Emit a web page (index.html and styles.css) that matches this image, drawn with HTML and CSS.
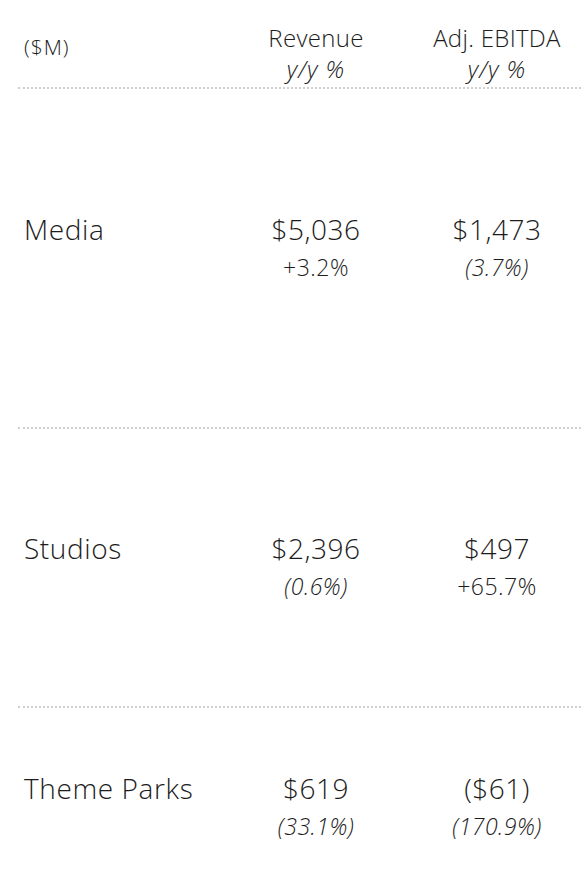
FILE: index.html
```html
<!DOCTYPE html>
<html lang="en">
  <head>
    <meta charset="UTF-8" />
    <title>Segment results</title>
    <link rel="stylesheet" href="styles.css">
  </head>
  <body>
    <div class="table">
      <div class="row head">
        <div class="label unit">($M)</div>
        <div class="cell">
          <div class="title">Revenue</div>
          <div class="sub neg">y/y %</div>
        </div>
        <div class="cell">
          <div class="title">Adj. EBITDA</div>
          <div class="sub neg">y/y %</div>
        </div>
      </div>

      <!-- segments -->
      <div class="row seg media">
        <div class="label">Media</div>
        <div class="cell">
          <div class="main">$5,036</div>
          <div class="sub">+3.2%</div>
        </div>
        <div class="cell">
          <div class="main">$1,473</div>
          <div class="sub neg">(3.7%)</div>
        </div>
      </div>

      <div class="row seg studios">
        <div class="label">Studios</div>
        <div class="cell">
          <div class="main">$2,396</div>
          <div class="sub neg">(0.6%)</div>
        </div>
        <div class="cell">
          <div class="main">$497</div>
          <div class="sub">+65.7%</div>
        </div>
      </div>

      <div class="row seg parks">
        <div class="label">Theme Parks</div>
        <div class="cell">
          <div class="main">$619</div>
          <div class="sub neg">(33.1%)</div>
        </div>
        <div class="cell">
          <div class="main">($61)</div>
          <div class="sub neg">(170.9%)</div>
        </div>
      </div>
    </div>
  </body>
</html>
```

FILE: styles.css
```css
body {
  margin: 0;
  background: #ffffff;
  color: #1c1c1c;
  font-family: "Open Sans", "Noto Sans", sans-serif;
  font-weight: 300;
  overflow: hidden;
}

.table {
  margin-left: 18px;
}

.row {
  display: grid;
  grid-template-columns: 192px 180px 162px;
  column-gap: 10px;
  align-content: center;
  align-items: start;
  padding-left: 6px;
  border-top: 2px dotted #cfcfcf;
}

.row.head {
  border-top: none;
  height: 89px;
  align-items: center;
  padding-top: 20px;
  box-sizing: border-box;
  border-bottom: 2px dotted #cfcfcf;
}
.row.head + .row {
  border-top: none;
}

.cell {
  text-align: center;
}

.title {
  font-size: 24px;
  line-height: 30px;
  letter-spacing: 0.3px;
}

.label {
  font-size: 28px;
  line-height: 36px;
  letter-spacing: 0.6px;
}

.label.unit {
  font-size: 21px;
  line-height: 28px;
  letter-spacing: 1px;
  padding-bottom: 14px;
}

.main {
  font-size: 28px;
  line-height: 36px;
  letter-spacing: 0.5px;
}

.sub {
  font-size: 23px;
  line-height: 40px;
  letter-spacing: 0.5px;
}
.neg {
  font-style: italic;
}

.head .sub {
  font-size: 24px;
  line-height: 32px;
  letter-spacing: 1px;
}

/* row heights */
.media {
  height: 338px;
  padding-bottom: 18px;
  box-sizing: border-box;
}
.studios {
  height: 277px;
}
.parks {
  height: 200px;
}
```
